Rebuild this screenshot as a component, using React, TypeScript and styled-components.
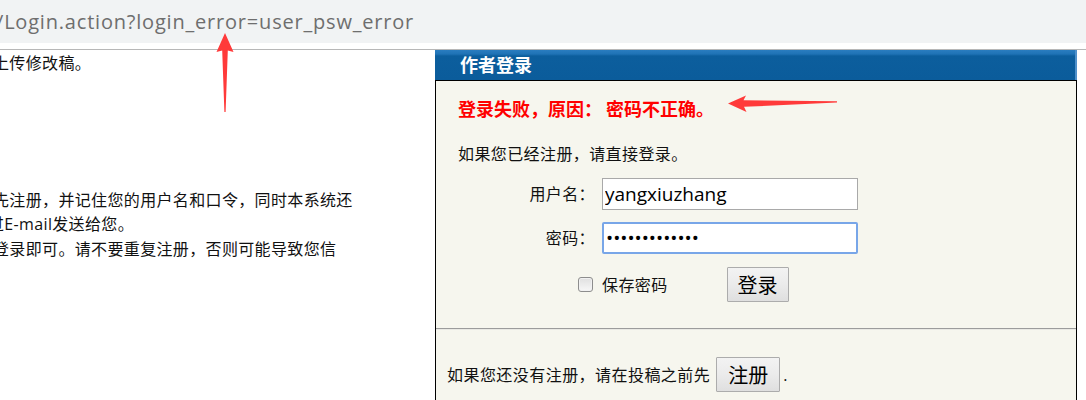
import React from "react";
import styled, { createGlobalStyle } from "styled-components";

const GlobalStyle = createGlobalStyle`
  html, body {
    margin: 0;
    padding: 0;
    background: #ffffff;
  }
  body {
    width: 1086px;
    height: 400px;
    overflow: hidden;
    font-family: "Open Sans", "Noto Sans CJK SC", sans-serif;
  }
`;

const CJK = `"Open Sans", "Noto Sans CJK SC", sans-serif`;

const Page = styled.div`
  position: relative;
  width: 1086px;
  height: 400px;
  overflow: hidden;
  background: #ffffff;
`;

const BrowserTop = styled.header`
  height: 49px;
  border-bottom: 1px solid #b7b7b7;
  background: #ffffff;
`;

const AddressBar = styled.div`
  height: 43px;
  background: #f1f3f4;
  display: flex;
  align-items: center;
  overflow: hidden;
`;

const Url = styled.span`
  margin-left: -4px;
  font-family: "Open Sans", sans-serif;
  font-size: 20px;
  line-height: 43px;
  letter-spacing: 0.8px;
  color: #6e6e6e;
  white-space: nowrap;
`;

const Content = styled.main`
  display: flex;
  align-items: flex-start;
`;

const LeftPane = styled.div`
  width: 435px;
  height: 350px;
  flex: none;
  overflow: hidden;
  font-family: ${CJK};
  font-size: 16px;
  letter-spacing: 0.35px;
  color: #111111;
`;

const Paragraph = styled.div<{ $top: number }>`
  margin-top: ${(p) => p.$top}px;
`;

const TextLine = styled.div<{ $shift: number }>`
  margin-left: ${(p) => p.$shift}px;
  line-height: 24.5px;
  white-space: nowrap;
`;

const Panel = styled.section`
  width: 642px;
  flex: none;
`;

const PanelHeader = styled.h2`
  margin: 0;
  height: 30px;
  padding-left: 25px;
  border-bottom: 1px solid #000000;
  background: linear-gradient(
    180deg,
    #2a7dc0 0px,
    #1f73b6 4px,
    #0c5e9d 6px,
    #0b5c9b 100%
  );
  box-shadow: inset -2px 0 0 #4f90ca;
  color: #ffffff;
  font-family: "Noto Sans CJK SC", sans-serif;
  font-weight: 700;
  font-size: 18px;
  line-height: 29px;
`;

const PanelBody = styled.div`
  height: 330px;
  background: #f6f6ee;
  border-left: 1px solid #000000;
  border-right: 1px solid #000000;
  padding-top: 15px;
  box-sizing: border-box;
  font-family: ${CJK};
  color: #111111;
`;

const ErrorText = styled.p`
  margin: 0;
  padding-left: 22px;
  font-family: "Noto Sans CJK SC", sans-serif;
  font-weight: 700;
  font-size: 18px;
  line-height: 24px;
  color: #ff0000;
`;

const Intro = styled.p`
  margin: 22px 0 0;
  padding-left: 22px;
  font-size: 16px;
  line-height: 24px;
  letter-spacing: 0.4px;
`;

const FormGrid = styled.div`
  margin-top: 12px;
  display: grid;
  grid-template-columns: 159px 256px;
  column-gap: 7px;
  row-gap: 12px;
  align-items: center;
`;

const FieldLabel = styled.label`
  text-align: right;
  font-size: 16px;
  line-height: 24px;
  letter-spacing: 0.4px;
  white-space: nowrap;
`;

const TextInput = styled.input<{ $focused?: boolean }>`
  box-sizing: border-box;
  width: 256px;
  height: 32px;
  margin: 0;
  padding: 0 2px;
  border: ${(p) => (p.$focused ? "2px solid #78a6e8" : "1px solid #a9a9a9")};
  border-radius: ${(p) => (p.$focused ? 2 : 0)}px;
  background: #ffffff;
  color: #000000;
  font-family: "Open Sans", sans-serif;
  font-size: 19px;
  outline: none;
`;

const OptionsRow = styled.div`
  margin-top: 13px;
  height: 35px;
  padding-left: 142px;
  display: flex;
  align-items: center;
`;

const CheckBox = styled.input`
  appearance: none;
  -webkit-appearance: none;
  box-sizing: border-box;
  width: 15px;
  height: 15px;
  margin: 0 9px 0 0;
  border: 1px solid #8d8d8d;
  border-radius: 3px;
  background: linear-gradient(180deg, #e0e0e0 0%, #f7f7f7 100%);
  box-shadow: inset 0 0 0 1px #f1f1f1;
`;

const CheckText = styled.span`
  font-size: 16px;
  line-height: 24px;
  letter-spacing: 0.4px;
`;

const Button = styled.button<{ $pad: number; $gap: number }>`
  box-sizing: border-box;
  height: 35px;
  margin: 0 0 0 ${(p) => p.$gap}px;
  padding: 0 ${(p) => p.$pad}px;
  border: 1px solid #acacac;
  border-radius: 1px;
  background: linear-gradient(180deg, #f3f3f3 0%, #ebebeb 50%, #dfdfdf 100%);
  color: #000000;
  font-family: "Noto Sans CJK SC", sans-serif;
  font-size: 20px;
  line-height: 33px;
  cursor: pointer;
`;

const Divider = styled.hr`
  margin: 26px 0 0;
  height: 0;
  border: none;
  border-top: 1px solid #9c9c9c;
  border-bottom: 1px solid #e9e9e4;
`;

const RegisterRow = styled.div`
  margin-top: 27px;
  padding-left: 11px;
  display: flex;
  align-items: center;
  font-size: 16px;
  line-height: 24px;
  letter-spacing: 0.45px;
  white-space: nowrap;
`;

const Period = styled.span`
  margin-left: 3px;
`;

const Annotations = styled.svg`
  position: absolute;
  left: 0;
  top: 0;
  width: 1086px;
  height: 400px;
  pointer-events: none;
`;

export default function App() {
  return (
    <Page>
      <GlobalStyle />
      <BrowserTop>
        <AddressBar>
          <Url>/Login.action?login_error=user_psw_error</Url>
        </AddressBar>
      </BrowserTop>
      <Content>
        <LeftPane>
          <Paragraph $top={1}>
            <TextLine $shift={-7}>上传修改稿。</TextLine>
          </Paragraph>
          <Paragraph $top={112}>
            <TextLine $shift={-7}>先注册，并记住您的用户名和口令，同时本系统还</TextLine>
            <TextLine $shift={-12}>过E-mail发送给您。</TextLine>
            <TextLine $shift={-7}>登录即可。请不要重复注册，否则可能导致您信</TextLine>
          </Paragraph>
        </LeftPane>
        <Panel>
          <PanelHeader>作者登录</PanelHeader>
          <PanelBody>
            <ErrorText>登录失败，原因： 密码不正确。</ErrorText>
            <Intro>如果您已经注册，请直接登录。</Intro>
            <FormGrid>
              <FieldLabel htmlFor="user">用户名：</FieldLabel>
              <TextInput id="user" type="text" defaultValue="yangxiuzhang" readOnly />
              <FieldLabel htmlFor="pwd">密码：</FieldLabel>
              <TextInput id="pwd" type="password" defaultValue="yangxiuzhang1" readOnly $focused />
            </FormGrid>
            <OptionsRow>
              <CheckBox type="checkbox" id="save" />
              <CheckText>保存密码</CheckText>
              <Button type="button" $pad={10} $gap={59}>登录</Button>
            </OptionsRow>
            <Divider />
            <RegisterRow>
              <span>如果您还没有注册，请在投稿之前先</span>
              <Button type="button" $pad={11} $gap={6}>注册</Button>
              <Period>.</Period>
            </RegisterRow>
          </PanelBody>
        </Panel>
      </Content>
      <Annotations viewBox="0 0 1086 400">
        <polygon
          points="225,33 233.5,52 227.8,50.5 225.6,112 224.4,112 222.2,50.5 216.5,52"
          fill="#ff3a3a"
        />
        <polygon
          points="728,103.5 746,95.5 743.5,100.3 837,101.3 837,102.6 744,106.8 746.5,112"
          fill="#ff3a3a"
        />
      </Annotations>
    </Page>
  );
}
